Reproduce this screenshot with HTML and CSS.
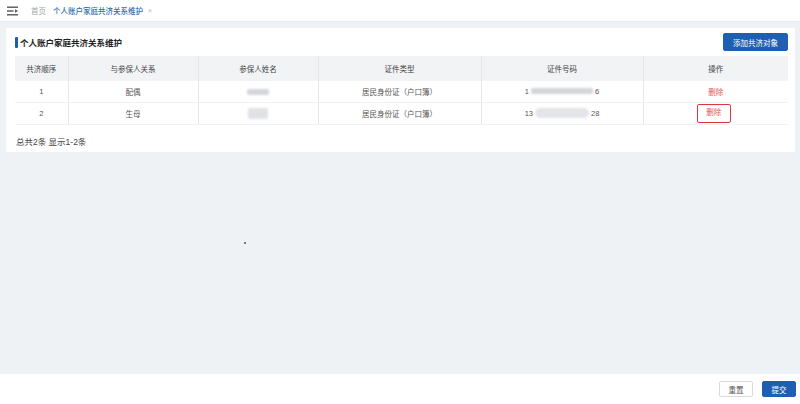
FILE: index.html
```html
<!DOCTYPE html>
<html lang="zh">
<head>
<meta charset="utf-8">
<link rel="stylesheet" href="styles.css">
</head>
<body>
<div class="app">
  <div class="tabbar">
    <svg class="menu-icon" width="12" height="10" viewBox="0 0 12 10">
      <rect x="0" y="0.5" width="11" height="1.4" fill="#555"/>
      <rect x="0" y="4.3" width="6.5" height="1.4" fill="#555"/>
      <path d="M8 3.2 L11 5 L8 6.8 Z" fill="#555"/>
      <rect x="0" y="8.1" width="11" height="1.4" fill="#555"/>
    </svg>
    <span class="tab">首页</span>
    <span class="tab active">个人账户家庭共济关系维护<span class="close">×</span></span>
  </div>
  <div class="main">
    <div class="card">
      <div class="card-head">
        <div class="title"><span class="title-bar"></span>个人账户家庭共济关系维护</div>
        <button class="btn primary add">添加共济对象</button>
      </div>
      <table class="grid">
        <colgroup>
          <col class="c1"><col class="c2"><col class="c3"><col class="c4"><col class="c5"><col class="c6">
        </colgroup>
        <thead>
          <tr><th>共济顺序</th><th>与参保人关系</th><th>参保人姓名</th><th>证件类型</th><th>证件号码</th><th>操作</th></tr>
        </thead>
        <tbody>
          <tr>
            <td>1</td><td>配偶</td><td><span class="blur b1"></span></td><td>居民身份证（户口簿）</td>
            <td><span class="idn">1<span class="blur b3"></span>6</span></td>
            <td><span class="del">删除</span></td>
          </tr>
          <tr>
            <td>2</td><td>生母</td><td><span class="blur b2"></span></td><td>居民身份证（户口簿）</td>
            <td><span class="idn">13<span class="blur b4"></span>28</span></td>
            <td><span class="del boxed">删除</span></td>
          </tr>
        </tbody>
      </table>
      <div class="summary">总共2条 显示1-2条</div>
    </div>
    <span class="dot"></span>
  </div>
  <div class="footer">
    <button class="btn plain">重置</button>
    <button class="btn primary">提交</button>
  </div>
</div>
</body>
</html>
```
FILE: styles.css
```css
* { box-sizing: border-box; }
html, body { margin: 0; padding: 0; }
body {
  font-family: "Liberation Sans", "Noto Sans CJK SC", sans-serif;
  color: #555;
  background: #eff2f5;
}
.app {
  width: 800px;
  height: 404px;
  display: flex;
  flex-direction: column;
}
.tabbar {
  height: 22px;
  background: #fff;
  display: flex;
  align-items: center;
  padding-left: 7px;
  border-bottom: 1px solid #e8ebef;
  flex: none;
}
.menu-icon { margin-right: 12px; }
.tab {
  font-size: 7.5px;
  color: #a0a4aa;
  margin-right: 7px;
  display: flex;
  align-items: center;
}
.tab.active { color: #2f6fb3; font-weight: 500; }
.close { color: #b5b8bd; margin-left: 5px; font-size: 7px; font-weight: normal; }
.main {
  flex: 1;
  padding: 6px 5px 0 6px;
  position: relative;
}
.card {
  background: #fff;
  height: 124px;
  padding: 5px 7px 0 9px;
  display: flex;
  flex-direction: column;
}
.card-head {
  height: 18px;
  display: flex;
  align-items: center;
  justify-content: space-between;
}
.title {
  display: flex;
  align-items: center;
  font-size: 8.5px;
  font-weight: bold;
  color: #222;
}
.title-bar {
  width: 3px;
  height: 11px;
  background: #1f5fae;
  margin-right: 2px;
  border-radius: 1px;
}
.btn {
  font-family: inherit;
  font-size: 7.5px;
  border-radius: 2px;
  padding: 0;
  cursor: pointer;
}
.btn.primary {
  background: #1e5fb2;
  color: #fff;
  border: 1px solid #1e5fb2;
}
.btn.plain {
  background: #fff;
  color: #555;
  border: 1px solid #d7dadf;
}
.add { width: 65px; height: 18px; }
.grid {
  margin-top: 5px;
  width: 773px;
  border-collapse: collapse;
  table-layout: fixed;
  font-size: 7.5px;
  color: #555;
}
.c1 { width: 53px; }
.c2 { width: 130px; }
.c3 { width: 120px; }
.c4 { width: 163px; }
.c5 { width: 162px; }
.c6 { width: 145px; }
.grid th {
  background: #f2f3f5;
  height: 25px;
  font-weight: normal;
  color: #444;
  border-left: 1px solid #e4e6ea;
}
.grid td {
  height: 21px;
  text-align: center;
  border-left: 1px solid #e4e6ea;
  border-bottom: 1px solid #f0f1f3;
}
.grid th:first-child, .grid td:first-child { border-left: none; }
.blur {
  display: inline-block;
  vertical-align: middle;
  background: #d4d6d9;
  border-radius: 2px;
  filter: blur(1px);
}
.b1 { width: 22px; height: 6px; }
.b2 { width: 20px; height: 11px; background: #e0e2e5; }
.b3 { width: 62px; height: 6px; margin: 0 2px; }
.b4 { width: 54px; height: 10px; margin: 0 2px; background: #e3e5e8; border-radius: 5px; }
.idn { display: inline-flex; align-items: center; }
.del { color: #e0575b; display: inline-block; }
.del.boxed {
  border: 1.5px solid #d8393c;
  border-radius: 2px;
  width: 34px;
  height: 19px;
  line-height: 16px;
  margin-right: 4px;
}
.summary {
  margin-top: 10px;
  font-size: 8.5px;
  color: #444;
  padding-left: 1px;
}
.dot {
  position: absolute;
  left: 244px;
  top: 220px;
  width: 2px;
  height: 2px;
  background: #555;
  border-radius: 50%;
}
.footer {
  height: 30px;
  background: #fff;
  flex: none;
  display: flex;
  align-items: center;
  justify-content: flex-end;
  gap: 9px;
  padding-right: 4px;
}
.footer .btn { width: 34px; height: 16px; }
```
